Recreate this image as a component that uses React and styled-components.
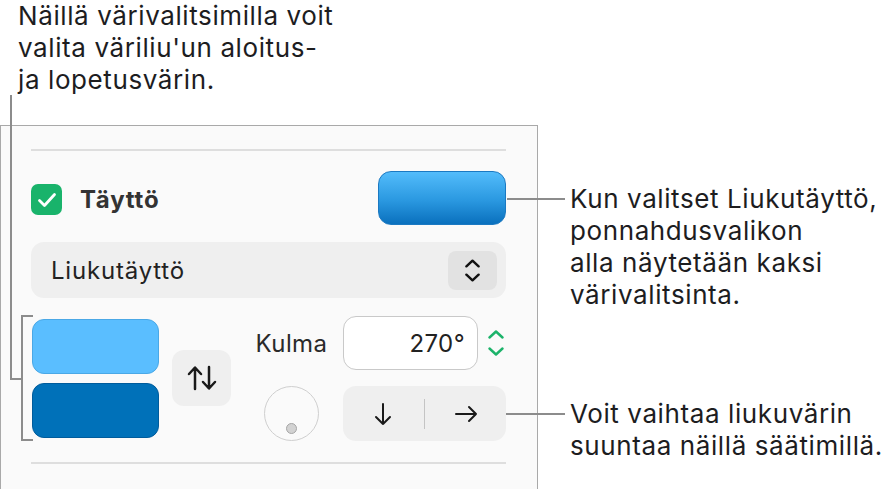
import React from "react";
import styled, { createGlobalStyle } from "styled-components";

const Global = createGlobalStyle`
  html, body {
    margin: 0;
    padding: 0;
    background: #ffffff;
  }
  body {
    font-family: Inter, "Noto Sans", "Liberation Sans", sans-serif;
    color: #1d1d1f;
  }
`;

const Page = styled.div`
  position: relative;
  width: 894px;
  height: 489px;
  overflow: hidden;
  display: grid;
  grid-template-columns: 538px 1fr;
  column-gap: 32px;
`;

const LeftCol = styled.div`
  display: flex;
  flex-direction: column;
`;

const Note = styled.p`
  margin: 0;
  font-size: 26px;
  line-height: 32px;
  letter-spacing: 0.6px;
  white-space: nowrap;
  color: #1d1d1f;
`;

const TopNote = styled(Note)`
  padding-left: 18px;
  height: 96px;
`;

const RightCol = styled.div`
  display: flex;
  flex-direction: column;
  padding-top: ${(p) => p.top}px;
`;

const CalloutB = styled(Note)`
  margin-top: 87px;
`;

const Panel = styled.div`
  margin-top: 29px;
  height: 366px;
  box-sizing: border-box;
  border: 1.5px solid #a9a9a9;
  background: #fafafa;
  padding: 0 31px 0 30px;
  display: flex;
  flex-direction: column;
`;

const Separator = styled.div`
  height: 2px;
  background: #dedede;
  margin-top: ${(p) => p.top}px;
`;

const FillRow = styled.div`
  margin-top: 20px;
  height: 54px;
  display: flex;
  align-items: center;
  justify-content: space-between;
`;

const CheckLabel = styled.div`
  display: flex;
  align-items: center;
  gap: 18px;
  padding-top: 3px;
`;

const Checkbox = styled.div`
  width: 31px;
  height: 31px;
  border-radius: 7px;
  background: #19b36b;
  display: flex;
  align-items: center;
  justify-content: center;
`;

const UiText = styled.span`
  font-size: 24px;
  letter-spacing: ${(p) => (p.wide ? 0.8 : 0.4)}px;
  color: ${(p) => p.color || "#222222"};
  font-weight: ${(p) => (p.bold ? 700 : 400)};
`;

const ColorWell = styled.div`
  width: 128px;
  height: 54px;
  box-sizing: border-box;
  border-radius: 13px;
  border: 1px solid #1b79c2;
  background: linear-gradient(to bottom, #53bcfb 0%, #2a98e0 55%, #0a70bd 100%);
`;

const Popup = styled.div`
  margin-top: 17px;
  height: 56px;
  border-radius: 13px;
  background: #efefef;
  display: flex;
  align-items: center;
  justify-content: space-between;
  padding: 0 9px 0 20px;
`;

const PopupStepper = styled.div`
  width: 49px;
  height: 39px;
  border-radius: 8px;
  background: #e2e2e2;
  display: flex;
  align-items: center;
  justify-content: center;
`;

const GradientSection = styled.div`
  margin-top: 17px;
  display: flex;
  align-items: center;
`;

const SwatchStack = styled.div`
  display: flex;
  flex-direction: column;
  gap: 9px;
  padding-left: 1px;
`;

const Swatch = styled.div`
  width: 127px;
  height: 55px;
  box-sizing: border-box;
  border-radius: 12px;
  background: ${(p) => p.fill};
  border: 1px solid ${(p) => p.edge};
`;

const SquareButton = styled.div`
  margin-left: 13px;
  width: 60px;
  height: 56px;
  border-radius: 12px;
  background: #efefef;
  display: flex;
  align-items: center;
  justify-content: center;
`;

const Controls = styled.div`
  margin-left: 19px;
  display: grid;
  grid-template-columns: 83px auto;
  grid-template-rows: 56px 55px;
  column-gap: 10px;
  row-gap: 15px;
  align-items: center;
  justify-items: center;
`;

const InputGroup = styled.div`
  justify-self: start;
  display: flex;
  align-items: center;
  gap: 10px;
`;

const AngleInput = styled.div`
  width: 135px;
  height: 54px;
  box-sizing: border-box;
  border: 1.5px solid #c9c9c9;
  border-radius: 13px;
  background: #ffffff;
  display: flex;
  align-items: center;
  justify-content: flex-end;
  padding-right: 12px;
`;

const Stepper = styled.div`
  display: flex;
  flex-direction: column;
  gap: ${(p) => p.gap}px;
`;

const Dial = styled.div`
  position: relative;
  width: 55px;
  height: 55px;
  box-sizing: border-box;
  border-radius: 50%;
  border: 1.5px solid #cfcfcf;
  background: #fafafa;
`;

const DialKnob = styled.div`
  position: absolute;
  left: 50%;
  bottom: 6px;
  width: 11px;
  height: 11px;
  margin-left: -5.5px;
  box-sizing: border-box;
  border-radius: 50%;
  background: #d2d2d2;
  border: 1.5px solid #a6a6a6;
`;

const Segmented = styled.div`
  justify-self: start;
  width: 163px;
  height: 55px;
  border-radius: 13px;
  background: #efefef;
  display: flex;
  align-items: center;
`;

const Segment = styled.div`
  flex: 1;
  display: flex;
  align-items: center;
  justify-content: center;
`;

const SegmentDivider = styled.div`
  width: 1.5px;
  height: 30px;
  background: #c4c4c4;
`;

const Leaders = styled.svg`
  position: absolute;
  left: 0;
  top: 0;
  pointer-events: none;
`;

const Chevron = ({ dir, color = "#111", w = 16, h = 9, sw = 2.6 }) => (
  <svg width={w} height={h} viewBox="0 0 16 9">
    <path
      d={dir === "up" ? "M1.5 7.5 L8 1.5 L14.5 7.5" : "M1.5 1.5 L8 7.5 L14.5 1.5"}
      fill="none"
      stroke={color}
      strokeWidth={sw}
      strokeLinecap="round"
      strokeLinejoin="round"
    />
  </svg>
);

const App = () => {
  return (
    <Page>
      <Global />
      <LeftCol>
        <TopNote>
          Näillä värivalitsimilla voit
          <br />
          valita väriliu'un aloitus-
          <br />
          ja lopetusvärin.
        </TopNote>
        <Panel>
          <Separator top={23} />
          <FillRow>
            <CheckLabel>
              <Checkbox>
                <svg width="20" height="16" viewBox="0 0 20 16">
                  <path
                    d="M2.5 8.5 L7.5 13.5 L17.5 2.5"
                    fill="none"
                    stroke="#ffffff"
                    strokeWidth="2.8"
                    strokeLinecap="round"
                    strokeLinejoin="round"
                  />
                </svg>
              </Checkbox>
              <UiText bold wide color="#333333">Täyttö</UiText>
            </CheckLabel>
            <ColorWell />
          </FillRow>
          <Popup>
            <UiText wide>Liukutäyttö</UiText>
            <PopupStepper>
              <Stepper gap={5}>
                <Chevron dir="up" w={15} h={9} />
                <Chevron dir="down" w={15} h={9} />
              </Stepper>
            </PopupStepper>
          </Popup>
          <GradientSection>
            <SwatchStack>
              <Swatch fill="#5abeff" edge="#4aa8e6" />
              <Swatch fill="#0071b9" edge="#005c9c" />
            </SwatchStack>
            <SquareButton>
              <svg width="30" height="26" viewBox="0 0 30 26">
                <path
                  d="M8 24 V3 M2 9 L8 2.5 L14 9 M22 2 V23 M16 17 L22 23.5 L28 17"
                  fill="none"
                  stroke="#1a1a1a"
                  strokeWidth="2.5"
                  strokeLinecap="round"
                  strokeLinejoin="round"
                />
              </svg>
            </SquareButton>
            <Controls>
              <UiText color="#2a2a2a">Kulma</UiText>
              <InputGroup>
                <AngleInput>
                  <UiText>270°</UiText>
                </AngleInput>
                <Stepper gap={8}>
                  <Chevron dir="up" color="#1cb36a" w={16} h={9} sw={2.4} />
                  <Chevron dir="down" color="#1cb36a" w={16} h={9} sw={2.4} />
                </Stepper>
              </InputGroup>
              <Dial>
                <DialKnob />
              </Dial>
              <Segmented>
                <Segment>
                  <svg width="18" height="24" viewBox="0 0 18 24">
                    <path
                      d="M9 2 V22 M2 15 L9 22 L16 15"
                      fill="none"
                      stroke="#1a1a1a"
                      strokeWidth="2"
                      strokeLinecap="round"
                      strokeLinejoin="round"
                    />
                  </svg>
                </Segment>
                <SegmentDivider />
                <Segment>
                  <svg width="24" height="18" viewBox="0 0 24 18">
                    <path
                      d="M2 9 H22 M15 2 L22 9 L15 16"
                      fill="none"
                      stroke="#1a1a1a"
                      strokeWidth="2"
                      strokeLinecap="round"
                      strokeLinejoin="round"
                    />
                  </svg>
                </Segment>
              </Segmented>
            </Controls>
          </GradientSection>
          <Separator top={21} />
        </Panel>
      </LeftCol>
      <RightCol top={183}>
        <Note>
          Kun valitset Liukutäyttö,
          <br />
          ponnahdusvalikon
          <br />
          alla näytetään kaksi
          <br />
          värivalitsinta.
        </Note>
        <CalloutB>
          Voit vaihtaa liukuvärin
          <br />
          suuntaa näillä säätimillä.
        </CalloutB>
      </RightCol>
      <Leaders width="894" height="489" viewBox="0 0 894 489">
        <g fill="none" stroke="#8c8c8c" strokeWidth="2">
          <path d="M11 95 V379 H22" />
          <path d="M33 316 H22 V440 H33" />
          <path d="M507 199 H565" />
          <path d="M506 414 H565" />
        </g>
      </Leaders>
    </Page>
  );
};

export default App;
